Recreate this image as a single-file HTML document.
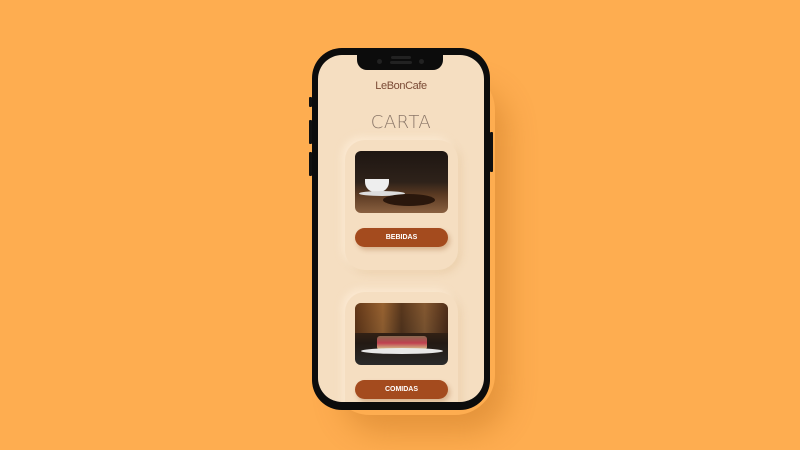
<!DOCTYPE html>
<html><head><style>
body{margin:0;width:800px;height:450px;background:#FEAD50;overflow:hidden;position:relative;font-family:"Liberation Sans",sans-serif}
.shadow{position:absolute;left:330px;top:70px;width:165px;height:345px;border-radius:40px;box-shadow:12px 18px 30px rgba(170,90,10,.3)}
.phone{position:absolute;left:312px;top:48px;width:178px;height:362px;background:#0c0c0c;border-radius:30px}
.btnside{position:absolute;background:#111;width:3px;border-radius:1px}
.screen{position:absolute;left:318px;top:55px;width:166px;height:347px;background:#F5DEC1;border-radius:24px;overflow:hidden}
.notch{position:absolute;left:357px;top:53px;width:86px;height:17px;background:#0c0c0c;border-radius:0 0 10px 10px}
.dot{position:absolute;width:5px;height:5px;border-radius:50%;background:#222}
.logo{position:absolute;left:0;width:166px;top:25px;text-align:center;font-size:11px;color:#7a4a35;letter-spacing:-0.4px}
.carta{position:absolute;left:0;width:166px;top:57px;text-align:center;font-size:18px;color:#8a7668;letter-spacing:0.5px;font-family:"DejaVu Sans",sans-serif;font-weight:200}
.card{position:absolute;left:27px;width:113px;height:130px;border-radius:20px;background:#F5DEC1;box-shadow:-3px -3px 8px rgba(255,240,220,.7),3px 3px 8px rgba(225,190,145,.45)}
.img{position:absolute;left:10px;top:11px;width:93px;height:62px;border-radius:6px;overflow:hidden}
.b{position:absolute;left:10px;top:88px;width:93px;height:19px;border-radius:10px;background:#A44B1E;color:#fff;font-size:7px;font-weight:bold;text-align:center;line-height:19px;box-shadow:2px 3px 5px rgba(150,80,30,.3)}
</style></head><body>
<div class="shadow"></div>
<div class="btnside" style="left:309px;top:97px;height:10px"></div>
<div class="btnside" style="left:309px;top:120px;height:24px"></div>
<div class="btnside" style="left:309px;top:152px;height:24px"></div>
<div class="btnside" style="left:490px;top:132px;height:40px"></div>
<div class="phone"></div>
<div class="screen">
 <div class="logo">LeBonCafe</div>
 <div class="carta">CARTA</div>
 <div class="card" style="top:85px">
  <div class="img" style="background:linear-gradient(180deg,#1e1612 0%,#2e221a 50%,#5a3a22 70%,#8a6040 100%)">
   <div style="position:absolute;left:10px;top:28px;width:24px;height:13px;background:#eee;border-radius:0 0 10px 10px"></div>
   <div style="position:absolute;left:4px;top:40px;width:46px;height:5px;background:#ddd;border-radius:50%"></div>
   <div style="position:absolute;left:28px;top:43px;width:52px;height:12px;background:#2a170c;border-radius:50%"></div>
  </div>
  <div class="b">BEBIDAS</div>
 </div>
 <div class="card" style="top:237px">
  <div class="img" style="background:linear-gradient(180deg,#5a3418 0%,#3a2415 40%,#231a14 65%,#2a2a2a 100%)">
   <div style="position:absolute;left:0;top:0;width:93px;height:30px;background:linear-gradient(90deg,#6a3a18,#c08040 30%,#5a3a20 50%,#a07040 75%,#4a2a18);opacity:.6"></div>
   <div style="position:absolute;left:22px;top:33px;width:50px;height:14px;background:linear-gradient(#8a6a50,#c04050 50%,#d8d090);border-radius:3px"></div>
   <div style="position:absolute;left:6px;top:45px;width:82px;height:6px;background:#e8e8e8;border-radius:50%"></div>
  </div>
  <div class="b">COMIDAS</div>
 </div>
</div>
<div class="notch"></div>
<div class="dot" style="left:377px;top:59px"></div>
<div class="dot" style="left:419px;top:59px"></div>
<div style="position:absolute;left:391px;top:56px;width:20px;height:3px;border-radius:2px;background:#222"></div>
<div style="position:absolute;left:390px;top:61px;width:22px;height:3px;border-radius:2px;background:#222"></div>
</body></html>
